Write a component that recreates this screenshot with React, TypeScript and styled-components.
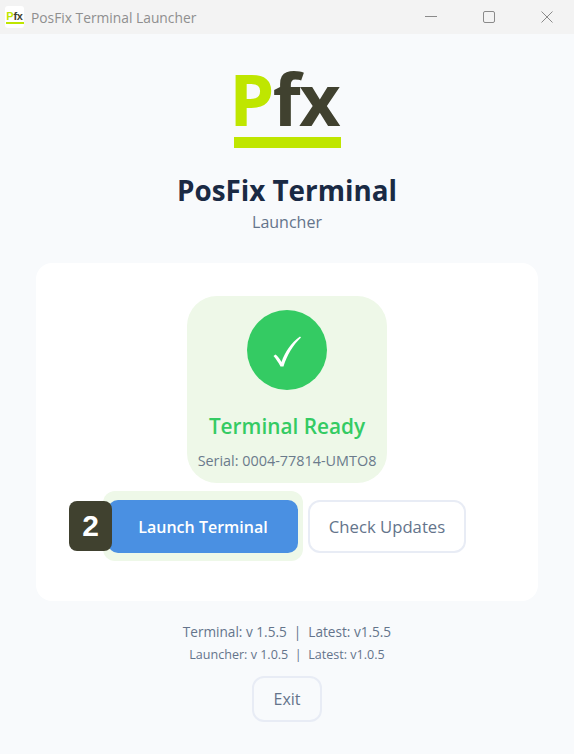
import styled, { createGlobalStyle } from "styled-components";

const GlobalStyle = createGlobalStyle`
  html, body {
    margin: 0;
    padding: 0;
    background: #f8fafc;
  }
  body {
    font-family: "Open Sans", "Noto Sans", "Liberation Sans", sans-serif;
  }
`;

const Page = styled.div`
  width: 574px;
  height: 754px;
  overflow: hidden;
  background: #f8fafc;
  display: flex;
  flex-direction: column;
`;

const TitleBar = styled.div`
  height: 34px;
  background: #f3f3f3;
  display: flex;
  align-items: center;
  flex-shrink: 0;
`;

const AppIcon = styled.div`
  width: 19px;
  height: 22px;
  margin-left: 5px;
  background: #ffffff;
  border-radius: 3px;
  display: flex;
  flex-direction: column;
  align-items: center;
  justify-content: center;
`;

const AppIconText = styled.div`
  font-family: "Liberation Sans", sans-serif;
  font-size: 11px;
  font-weight: 700;
  line-height: 10px;
  letter-spacing: -0.2px;
  color: #40412f;

  span {
    color: #bfe600;
  }
`;

const AppIconBar = styled.div`
  width: 18px;
  height: 2px;
  margin-top: 1px;
  background: #bfe600;
`;

const WindowTitle = styled.div`
  margin-left: 7px;
  font-size: 13.8px;
  color: #8f8f8f;
`;

const WindowControls = styled.div`
  margin-left: auto;
  margin-right: -2px;
  display: flex;
  align-items: center;
`;

const WindowControl = styled.div`
  width: 58px;
  display: flex;
  justify-content: center;
  svg {
    display: block;
  }
`;

const Main = styled.main`
  display: flex;
  flex-direction: column;
  align-items: center;
`;

const Logo = styled.div`
  margin-top: 34px;
  width: 107px;
  display: flex;
  flex-direction: column;
`;

const LogoLetters = styled.div`
  height: 69px;
  margin-left: -4px;
  font-family: "Noto Sans", sans-serif;
  font-weight: 700;
  font-size: 72px;
  line-height: 60px;
  letter-spacing: -1.5px;
  white-space: nowrap;
  color: #40412f;
  span {
    color: #bfe600;
  }
`;

const LogoBar = styled.div`
  height: 11px;
  background: #bfe600;
`;

const Title = styled.h1`
  margin: 24px 0 0;
  font-size: 27.8px;
  line-height: 36px;
  font-weight: 700;
  color: #1a2a44;
`;

const Subtitle = styled.div`
  margin-top: 3px;
  font-size: 16px;
  line-height: 22px;
  color: #64748b;
`;

const Card = styled.section`
  margin-top: 30px;
  width: 502px;
  height: 338px;
  box-sizing: border-box;
  padding-top: 33px;
  background: #ffffff;
  border-radius: 16px;
  display: flex;
  flex-direction: column;
  align-items: center;
`;

const StatusBox = styled.div`
  width: 200px;
  height: 187px;
  box-sizing: border-box;
  padding-top: 14px;
  background: #eef8e8;
  border-radius: 30px;
  display: flex;
  flex-direction: column;
  align-items: center;
`;

const CheckCircle = styled.div`
  width: 80px;
  height: 80px;
  padding-top: 3px;
  box-sizing: border-box;
  border-radius: 50%;
  background: #34cb63;
  display: flex;
  align-items: center;
  justify-content: center;
`;

const StatusText = styled.div`
  margin-top: 20px;
  font-size: 20.8px;
  line-height: 32px;
  font-weight: 600;
  color: #34cb63;
`;

const Serial = styled.div`
  margin-top: 9px;
  font-size: 14.4px;
  line-height: 20px;
  white-space: nowrap;
  color: #6b7b8c;
`;

const Actions = styled.div`
  margin-top: 8px;
  width: 100%;
  height: 70px;
  display: flex;
  align-items: center;
  padding-left: 67px;
  box-sizing: border-box;
`;

const Glow = styled.div`
  position: relative;
  width: 200px;
  height: 70px;
  box-sizing: border-box;
  padding: 9px 5px 8px;
  background: #eef8e8;
  border-radius: 12px;
`;

const LaunchButton = styled.button`
  display: block;
  width: 190px;
  height: 53px;
  border: none;
  border-radius: 10px;
  background: #4a90e2;
  color: #ffffff;
  font-family: inherit;
  font-size: 16px;
  font-weight: 600;
`;

const Badge = styled.div`
  position: absolute;
  left: -34px;
  top: 10px;
  width: 43px;
  height: 50px;
  border-radius: 8px;
  background: #40412f;
  color: #ffffff;
  font-family: "Liberation Sans", sans-serif;
  font-size: 30px;
  font-weight: 700;
  display: flex;
  align-items: center;
  justify-content: center;
`;

const OutlineButton = styled.button<{ $width: number; $height: number; $bg: string }>`
  display: block;
  width: ${(p) => p.$width}px;
  height: ${(p) => p.$height}px;
  box-sizing: border-box;
  border: 2px solid #e8ecf5;
  border-radius: 12px;
  background: ${(p) => p.$bg};
  color: #64748b;
  font-family: inherit;
  font-size: ${(p) => (p.$width > 100 ? 16.7 : 16)}px;
  white-space: nowrap;
  padding: 0;
`;

const UpdatesSlot = styled.div`
  margin-left: 5px;
`;

const Versions = styled.div`
  margin-top: 20px;
  display: flex;
  flex-direction: column;
  align-items: center;
  gap: 1px;
  color: #64748b;
`;

const VersionLine = styled.div<{ $size: number }>`
  font-size: ${(p) => p.$size}px;
  line-height: 22px;
  white-space: pre;
`;

const ExitSlot = styled.div`
  margin-top: 10px;
`;

export default function App() {
  return (
    <>
      <GlobalStyle />
      <Page>
        <TitleBar>
          <AppIcon>
            <AppIconText>
              <span>P</span>fx
            </AppIconText>
            <AppIconBar />
          </AppIcon>
          <WindowTitle>PosFix Terminal Launcher</WindowTitle>
          <WindowControls>
            <WindowControl>
              <svg width="12" height="12" viewBox="0 0 12 12">
                <path d="M0 5.5h12" stroke="#8a8a8a" strokeWidth="1" />
              </svg>
            </WindowControl>
            <WindowControl>
              <svg width="12" height="12" viewBox="0 0 12 12">
                <rect x="0.5" y="0.5" width="11" height="11" rx="1.5" fill="none" stroke="#8a8a8a" />
              </svg>
            </WindowControl>
            <WindowControl>
              <svg width="12" height="12" viewBox="0 0 12 12">
                <path d="M0.5 0.5l11 11M11.5 0.5l-11 11" stroke="#8a8a8a" strokeWidth="1" />
              </svg>
            </WindowControl>
          </WindowControls>
        </TitleBar>
        <Main>
          <Logo>
            <LogoLetters>
              <span>P</span>fx
            </LogoLetters>
            <LogoBar />
          </Logo>
          <Title>PosFix Terminal</Title>
          <Subtitle>Launcher</Subtitle>
          <Card>
            <StatusBox>
              <CheckCircle>
                <svg width="28" height="31" viewBox="0 0 28 31" fill="#ffffff">
                  <path d="M0.5 20L2.5 18.5C4.5 20 6.5 22.5 8.5 26C12 16 18 7 27 0.5L28 1.5C20 9 14 19 10.5 30.5L7.5 30.5C5.5 26.5 3 23 0.5 20Z" />
                </svg>
              </CheckCircle>
              <StatusText>Terminal Ready</StatusText>
              <Serial>Serial: 0004-77814-UMTO8</Serial>
            </StatusBox>
            <Actions>
              <Glow>
                <LaunchButton>Launch Terminal</LaunchButton>
                <Badge>2</Badge>
              </Glow>
              <UpdatesSlot>
                <OutlineButton $width={158} $height={53} $bg="#ffffff">
                  Check Updates
                </OutlineButton>
              </UpdatesSlot>
            </Actions>
          </Card>
          <Versions>
            <VersionLine $size={13.6}>Terminal: v 1.5.5  |  Latest: v1.5.5</VersionLine>
            <VersionLine $size={12.55}>Launcher: v 1.0.5  |  Latest: v1.0.5</VersionLine>
          </Versions>
          <ExitSlot>
            <OutlineButton $width={70} $height={46} $bg="#f8fafc">
              Exit
            </OutlineButton>
          </ExitSlot>
        </Main>
      </Page>
    </>
  );
}
